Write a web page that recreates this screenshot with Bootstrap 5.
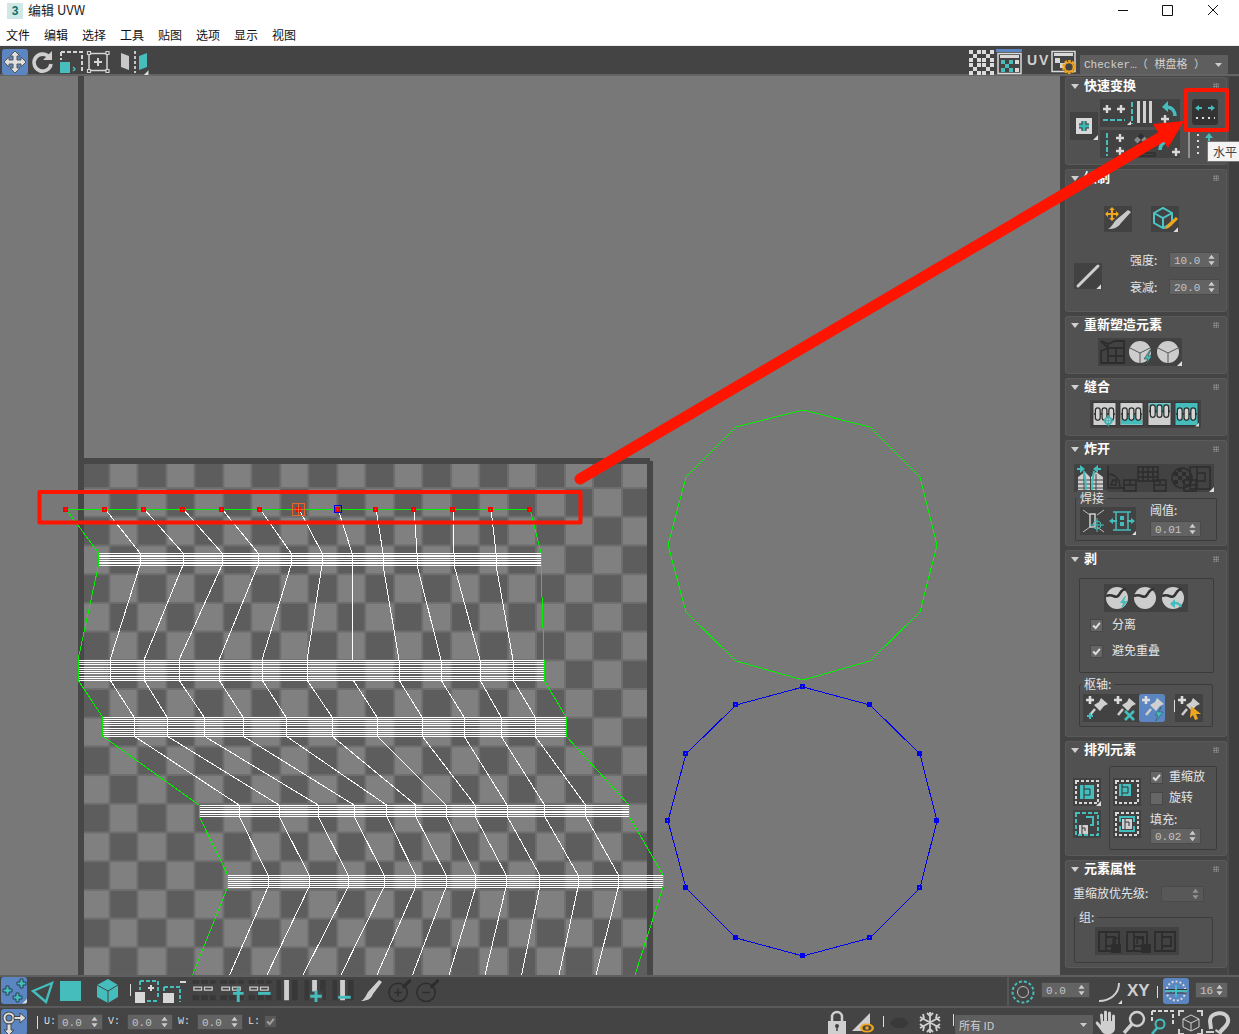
<!DOCTYPE html>
<html lang="zh">
<head>
    <meta charset="UTF-8">
    <title>编辑 UVW</title>
    <link href="https://cdn.jsdelivr.net/npm/bootstrap@5.3.0/dist/css/bootstrap.min.css" rel="stylesheet">
    <style>
        html, body { height: 1034px; overflow: hidden; background: #444; }
        body { width: 1239px; position: relative; font-family: "Noto Sans CJK SC", "Liberation Sans", sans-serif; font-size: 12px; color: #e4e4e4; }
        svg { display: block; flex: none; }
        .fl { fill: #ddd; }

        .titlebar { height: 22px; background: #fff; color: #222; font-size: 13px; }
        .logo3 { width: 16px; height: 16px; margin: 3px 5px 0 7px; background: #cfe8e6; color: #0d6f6c; font: bold 12px/16px "Liberation Sans", sans-serif; text-align: center; }
        .menubar { height: 24px; background: #fff; border-bottom: 1px solid #efefef; padding-left: 6px; gap: 14px; }
        .menubar .nav-link { padding: 0; color: #111; font-size: 12px; line-height: 25px; }

        .topbar { height: 30px; background: #444; padding: 3px 11px 0 2px; border-bottom: 2px solid #636363; }
        .btn-on { background: #5b86c2; border-radius: 3px; }
        .uvtxt { width: 26px; color: #cfcfcf; font: bold 14px/22px "Liberation Sans", sans-serif; letter-spacing: 2px; padding-left: 3px; }
        .combo { background: #5e5e5e; color: #cfcfcf; height: 19px; font-size: 11px; line-height: 21px; padding: 0 5px 0 4px; border-radius: 1px; }
        .combo-a { width: 148px; margin: 6px 0 0 2px; font-family: "Liberation Mono", "Noto Sans CJK SC", monospace; }
        .combo-b { width: 138px; margin-top: 6px; }

        .mainrow { height: 899px; }
        .viewport { width: 1060px; height: 899px; background: #787878; }
        .sidepanes { width: 179px; padding: 1px 0 0 5px; background: #444; }
        .pane-col { width: 162px; gap: 4px; }
        .scrollstrip { width: 12px; background: #3f3f3f; border-left: 2px solid #4b4b4b; }

        .pane { background: #515151; box-shadow: inset 0 0 0 1px #5a5a5a, inset 0 -1px 0 #3e3e3e; border-radius: 3px; position: relative; }
        .pane-h { height: 18px; line-height: 15px; padding-left: 19px; font-weight: 700; font-size: 13px; color: #fff; }
        .pane-h::before { content: ""; position: absolute; left: 6px; top: 7px; border: 4px solid transparent; border-top: 5px solid #cfcfcf; border-bottom: 0; }
        .pane-h::after { content: ""; position: absolute; right: 8px; top: 6px; width: 6px; height: 6px; background-image: radial-gradient(#888 1px, transparent 1px); background-size: 2.4px 2.4px; }
        .h88 { height: 88px; } .h143 { height: 143px; } .h58 { height: 58px; } .h106 { height: 106px; }
        .h187 { height: 187px; } .h115 { height: 115px; } .h108 { height: 108px; }

        .bx { background: #424242; }
        .spin { background: #636363; color: #c4c4c4; height: 16px; font: 11px/16px "Liberation Mono", monospace; padding: 0 4px; border-radius: 1px; border: 1px solid #4a4a4a; }
        .w51 { width: 51px; } .w46 { width: 46px; } .w49 { width: 49px; } .w33 { width: 33px; } .w43 { width: 43px; }
        .chk { width: 13px; height: 13px; background: #666; border: 1px solid #474747; flex: none; }
        .flabel { line-height: 13px; }
        .kbd-lbl { font: 10px/16px "Liberation Mono", monospace; color: #ddd; }
        .gbox { border: 1px solid #3b3b3b; border-radius: 2px; position: relative; }
        .glegend { position: absolute; top: -9px; left: 1px; background: #515151; padding: 0 3px; line-height: 16px; }

        .lm-2 { margin-left: 2px; } .lm-5 { margin-left: 5px; } .ms-9 { margin-left: 9px; } .ms-10 { margin-left: 10px; } .ms-14 { margin-left: 14px; } .ms-25 { margin-left: 25px; } .ms-33 { margin-left: 33px; } .ms-39 { margin-left: 39px; } .ms-8 { margin-left: 8px; } .ms-19 { margin-left: 19px; } .ms-28 { margin-left: 28px; } .ms-6 { margin-left: 6px; }
        .gt-1 { margin-top: 1px; } .gt-3 { margin-top: 3px; } .gt-4 { margin-top: 4px; } .gt-5 { margin-top: 5px; } .gt-6 { margin-top: 6px; } .gt-7 { margin-top: 7px; } .gt-8 { margin-top: 8px; } .gt-9 { margin-top: 9px; } .gt-10 { margin-top: 10px; } .gt-11 { margin-top: 11px; } .gt-13 { margin-top: 13px; } .gt-15 { margin-top: 15px; } .gt-17 { margin-top: 17px; } .gt-19 { margin-top: 19px; } .gt-20 { margin-top: 20px; } .lift-4 { margin-top: -4px; }

        .lab-a { width: 39px; } .lab-b { width: 88px; }
        .fs-weld { width: 142px; height: 43px; padding: 8px 0 0 4px; }
        .fs-peel { width: 135px; height: 95px; padding: 5px 0 0 24px; }
        .fs-pivot { width: 134px; height: 43px; padding: 9px 0 0 3px; }
        .fs-arr { width: 108px; height: 84px; padding: 4px 0 0 3px; }
        .fs-grp { width: 139px; height: 46px; padding: 9px 0 0 20px; }
        .fs-stitch { width: 111px; padding: 1px 2px; }
        .chk-row { margin-left: -14px; }
        .chk-text { margin-left: 9px; height: 13px; line-height: 10px; }
        .chk-text-s { margin-left: 6px; }
        .xyt { width: 30px; color: #cfcfcf; font: bold 17px/26px "Liberation Sans", sans-serif; padding-left: 5px; }
        .spin-off { background: #585858; }

        .bar1 { height: 31px; background: #444; border-top: 2px solid #5f5f5f; padding-left: 1px; }
        .bar1-r { width: 232px; height: 29px; border-left: 2px solid #565656; padding-top: 1px; }
        .bar2 { height: 28px; background: #444; border-top: 2px solid #5a5a5a; padding: 1px 3px 0 1px; }
        .bar2 .spin { margin-top: 5px; }
        .bar2 .kbd-lbl { margin-top: 5px; }
        .lbl-u { width: 13px; } .lbl-v { width: 24px; padding-left: 5px; } .lbl-l { width: 21px; padding-left: 5px; }
        .chk-off { margin-top: 6px; opacity: .6; }

        .overlay { position: absolute; top: 0; left: 0; pointer-events: none; z-index: 5; }
        .tip { position: absolute; left: 1207px; top: 141px; width: 32px; height: 21px; white-space: nowrap; background: #f4f4f4; border: 1px solid #777; border-right: 0; color: #444; font-size: 12px; line-height: 19px; padding-left: 5px; z-index: 6; }
    </style>
</head>
<body>
<svg width="0" height="0" class="position-absolute">
    <defs>
        <symbol id="fly" viewBox="0 0 28 28"><path fill="#ddd" d="M28 23v5h-5z"/></symbol>
        <symbol id="sp" viewBox="0 0 8 12"><path fill="#ccc" d="M4 0l3.500 4.500h-7zM4 12L.5 7.500h7z"/></symbol>
        <symbol id="tick" viewBox="0 0 13 13"><path fill="none" stroke="#ddd" stroke-width="2.400" d="M2.500 6.500l3 3 5-6"/></symbol>
        <symbol id="el" viewBox="0 0 28 28"><path fill="none" stroke="#2d2d2d" stroke-width="1.800" d="M4 5h20v19H4zM11 5v19M11 10h9v9h-9"/></symbol>
        <symbol id="pinb" viewBox="0 0 28 28"><path fill="none" stroke="#ddd" stroke-width="2.600" d="M3 6h8M7 2v8"/><path fill="#cfcfcf" d="M18 4l7 6-4 2-4 5-6-6 5-3z"/><path stroke="#cfcfcf" stroke-width="2.500" d="M12 15l-5 6"/></symbol>
        <symbol id="peel" viewBox="0 0 28 28"><circle cx="13" cy="14" r="11" fill="#cdcdcd"/><path fill="none" stroke="#333" stroke-width="2.600" d="M2 12c7-3 9 3 12 0s3-7 8-7"/></symbol>
        <symbol id="rows" viewBox="0 0 28 28"><path fill="#383838" d="M2 3h7v4H2zm9 0h7v4h-7zm9 0h6v4h-6zM2 19h7v5H2zm9 0h7v5h-7zm9 0h6v5h-6z"/><path fill="none" stroke="#ccc" stroke-width="1.300" d="M3.500 10.500h8v3h-8zM14.500 10.500h8v3h-8z"/></symbol>
        <symbol id="cols" viewBox="0 0 28 28"><path fill="#383838" d="M2 3h5v21H2zM18 3h6v21h-6z"/><path fill="#d0d0d0" d="M10 3h5v21h-5z"/></symbol>
        <symbol id="ball" viewBox="0 0 28 28"><circle cx="12" cy="16" r="9.500" fill="none" stroke="#2d2d2d" stroke-width="1.600"/><path stroke="#2d2d2d" stroke-width="3" d="M17 11L25 3"/></symbol>
        <symbol id="stitch" viewBox="0 0 26 26"><path stroke="#2d2d2d" stroke-width="1.400" d="M2 13h22"/><g fill="#d4d4d4" stroke="#2d2d2d" stroke-width="1.300"><rect x="3.500" y="6.500" width="5" height="13" rx="2.500"/><rect x="10.500" y="6.500" width="5" height="13" rx="2.500"/><rect x="17.500" y="6.500" width="5" height="13" rx="2.500"/></g></symbol>
        <symbol id="cluster" viewBox="0 0 12 12"><path fill="#dcdcdc" d="M0 0h4v4H0zm8 0h4v4H8zM4 4h4v4H4zM0 8h4v4H0zm8 0h4v4H8z"/></symbol>
    </defs>
</svg>

<div class="titlebar d-flex">
    <div class="logo3">3</div>
    <div>编辑 UVW</div>
    <div class="ms-auto d-flex">
        <svg width="122" height="22" viewBox="0 0 122 22" fill="none" stroke="#111"><path d="M1 10.500h10M45.500 5.500h10v10h-10zM91 5l10 10M101 5L91 15"/></svg>
    </div>
</div>
<nav class="nav menubar">
    <a class="nav-link" href="#">文件</a><a class="nav-link" href="#">编辑</a><a class="nav-link" href="#">选择</a><a class="nav-link" href="#">工具</a><a class="nav-link" href="#">贴图</a><a class="nav-link" href="#">选项</a><a class="nav-link" href="#">显示</a><a class="nav-link" href="#">视图</a>
</nav>

<div class="topbar d-flex">
    <svg class="btn-on" width="26" height="26" viewBox="0 0 26 26"><path fill="#dfdfdf" stroke="#555" d="M13 2l5 5h-3v4h4V8l5 5-5 5v-3h-4v4h3l-5 5-5-5h3v-4H7v3l-5-5 5-5v3h4V7H8z"/></svg>
    <svg width="30" height="26" viewBox="0 0 30 26"><path fill="none" stroke="#cfcfcf" stroke-width="3.600" d="M21 8a8.500 8.500 0 1 0 2 7"/><path fill="#cfcfcf" d="M24 2v9h-9z"/></svg>
    <svg width="28" height="26" viewBox="0 0 28 26"><path fill="none" stroke="#d4d4d4" stroke-width="2" stroke-dasharray="4 2" d="M3 3h21v20"/><path fill="#47bdbd" d="M2 13h10v11H2z"/><path fill="none" stroke="#47bdbd" stroke-width="1.500" d="M15 18l2 2-2 2"/><path fill="none" stroke="#d4d4d4" stroke-width="2" stroke-dasharray="4 2" d="M3 3v8"/></svg>
    <svg width="34" height="26" viewBox="0 0 34 26" fill="none" stroke="#d4d4d4"><path stroke-width="1.500" d="M3 4.500h18v17H3z"/><path fill="#444" stroke-width="1.200" d="M1.500 2.500h3v3h-3zM20 2.500h3v3h-3zM1.500 20.500h3v3h-3zM20 20.500h3v3h-3z"/><path stroke-width="2" d="M12 9v8M8 13h8"/></svg>
    <svg width="31" height="26" viewBox="0 0 31 26"><path fill="#c9c9c9" d="M1 4l8 3v14l-8-3z"/><path fill="none" stroke="#d4d4d4" stroke-width="1.800" stroke-dasharray="3 2" d="M15 2v22"/><path fill="#47bdbd" d="M27 4l-8 3v14l8-3z"/><use href="#fly"/></svg>

    <div class="ms-auto d-flex">
        <svg width="28" height="26" viewBox="0 0 28 26"><use href="#cluster" x="1" y="1" width="12" height="12"/><use href="#cluster" x="14" y="1" width="12" height="12"/><use href="#cluster" x="1" y="14" width="12" height="12"/><use href="#cluster" x="14" y="14" width="12" height="12"/></svg>
        <svg width="28" height="26" viewBox="0 0 28 26"><path fill="#5b86c2" d="M0 0h26v3H0z"/><path fill="none" stroke="#d8d8d8" stroke-width="1.500" d="M2 4.500h23v20H2z"/><path fill="#d8d8d8" d="M4 6h19v3H4z"/><path fill="#47bdbd" d="M5 11h4v4H5zm8 0h4v4h-4zm-4 4h4v4H9zm-4 4h4v4H5zm8 0h4v4h-4z"/><path fill="#d8d8d8" d="M19 11h4v4h-4zm0 8h4v4h-4z"/></svg>
        <div class="uvtxt">UV</div>
        <svg width="28" height="26" viewBox="0 0 28 26"><path fill="none" stroke="#d8d8d8" stroke-width="1.500" d="M2 2.500h23v20H2z"/><path fill="#d8d8d8" d="M4 4h19v3H4zM5 9h5v5H5zm5 5h5v5h-5z"/><circle cx="19" cy="18" r="5.500" fill="none" stroke="#efa21e" stroke-width="3" stroke-dasharray="2.500 1"/><circle cx="19" cy="18" r="4.500" fill="none" stroke="#efa21e" stroke-width="1.600"/></svg>
        <div class="combo combo-a d-flex justify-content-between"><span>Checker…（ 棋盘格 ）</span><svg width="9" height="19" viewBox="0 0 9 19"><path fill="#ccc" d="M1 8h7l-3.500 4z"/></svg></div>
    </div>
</div>

<div class="mainrow d-flex">
    <div class="viewport">
        <svg width="1060" height="899" viewBox="0 76 1060 899" shape-rendering="crispEdges">
            <defs>
                <pattern id="chess" patternUnits="userSpaceOnUse" x="80.560" y="459.400" width="56.940" height="57.400">
                    <rect width="56.940" height="57.400" fill="#6e6e6e"/>
                    <rect x="1" y="1" width="26.500" height="26.700" fill="#5d5d5d"/>
                    <rect x="29.500" y="1" width="26.500" height="26.700" fill="#808080"/>
                    <rect x="1" y="29.700" width="26.500" height="26.700" fill="#808080"/>
                    <rect x="29.500" y="29.700" width="26.500" height="26.700" fill="#5d5d5d"/>
                </pattern>
            </defs>
            <rect x="84" y="464" width="563" height="512" fill="url(#chess)"/>
            <rect x="78" y="76" width="6" height="900" fill="#474747"/>
            <rect x="84" y="458" width="566" height="6" fill="#474747"/>
            <rect x="647" y="461" width="6" height="515" fill="#474747"/>
            <g id="mesh" fill="none"></g>
            <polygon fill="none" stroke="#00f000" points="803,410 870,427 920,477 937,545 920,612 870,661 803,680 736,661 686,612 668,545 686,477 736,427"/>
            <polygon id="ringblue" fill="none" stroke="#0000f0" points="803,687 870,705 920,754 937,821 920,888 870,938 803,956 736,938 686,888 668,821 686,754 736,705"/>
        </svg>
    </div>

    <aside class="sidepanes d-flex">
        <div class="pane-col d-flex flex-column">

            <section class="pane h88">
                <div class="pane-h">快速变换</div>
                <div class="d-flex">
                    <svg class="bx lm-5 gt-17" width="28" height="28" viewBox="0 0 28 28"><rect x="6" y="6" width="16" height="16" fill="#d8d8d8"/><path fill="none" stroke="#333" stroke-width="5" d="M14 9v10M9 14h10"/><path fill="none" stroke="#3fb5b5" stroke-width="3" d="M14 9v10M9 14h10"/><use href="#fly"/></svg>
                    <div class="lm-2">
                        <div class="d-flex gt-4">
                            <svg class="bx" width="80" height="28" viewBox="0 0 80 28"><path fill="none" stroke="#d8d8d8" stroke-width="2.400" d="M3 10h8M7 6v8M17 10h8M21 6v8"/><path fill="none" stroke="#45bdbd" stroke-width="2" stroke-dasharray="5 2" d="M3 21h22"/><path fill="#ddd" d="M31 22v4h-4z"/><path fill="none" stroke="#45bdbd" stroke-width="2" stroke-dasharray="5 2" d="M32 3v22"/><path fill="#cfcfcf" d="M37 2h3v22h-3zM43 2h3v22h-3zM49 2h3v22h-3z"/><path fill="none" stroke="#45bdbd" stroke-width="3.600" d="M66 8c6 0 9 4 9 9"/><path fill="#45bdbd" d="M62 8l6-6v11z"/><path fill="none" stroke="#d8d8d8" stroke-width="2.400" d="M61 20h8M65 16v8"/></svg>
                            <svg class="ms-auto" width="26" height="26" viewBox="0 0 26 26"><rect width="26" height="26" rx="3" fill="#333"/><path fill="#45bdbd" d="M3 9l4-3v2h3v2H7v2zM23 9l-4-3v2h-3v2h3v2z"/><path stroke="#ddd" stroke-width="2" stroke-dasharray="2 4" d="M4 19h19"/></svg>
                        </div>
                        <div class="d-flex gt-3">
                            <svg class="bx" width="80" height="28" viewBox="0 0 80 28"><path fill="none" stroke="#45bdbd" stroke-width="2" stroke-dasharray="5 2" d="M7 3v23"/><path fill="none" stroke="#d8d8d8" stroke-width="2.400" d="M16 8h8M20 4v8M16 21h8M20 17v8"/><path fill="#2f2f2f" d="M34 10l7-7 7 7-7 7z"/><path fill="#888" d="M34 10l3.500-3.500 3.500 3.500-3.500 3.500zM41 10l3.500-3.500 3.500 3.500-3.500 3.500z"/><path fill="none" stroke="#2f2f2f" stroke-width="1.500" d="M37 23h18v3H37z"/><path fill="none" stroke="#45bdbd" stroke-width="3.600" d="M60 20c0-5 3-8 8-9"/><path fill="none" stroke="#d8d8d8" stroke-width="2.400" d="M72 22h8M76 18v8"/></svg>
                            <svg width="38" height="28" viewBox="0 0 38 28"><path fill="#909090" d="M8 0h2v28H8z"/><path stroke="#ddd" stroke-width="2" stroke-dasharray="2 4" d="M18 4v21"/><path fill="#45bdbd" d="M29 3l4 5h-3v12h-2V8h-3z"/></svg>
                        </div>
                    </div>
                </div>
            </section>

            <section class="pane h143">
                <div class="pane-h">绘制</div>
                <div class="d-flex ms-39 gt-19">
                    <svg class="bx" width="28" height="26" viewBox="0 0 28 26"><path fill="#f0a51e" d="M8 1l3 3H9v3h3V5l3 3-3 3V9H9v3h2l-3 3-3-3h2V9H4v2L1 8l3-3v2h3V4H5z"/><path fill="#c9c9c9" d="M24 4l3 2-10 11c-3 5-8 6-13 6 4-2 5-6 8-9z"/></svg>
                    <svg class="bx ms-19" width="28" height="26" viewBox="0 0 28 26"><path fill="none" stroke="#4cc4c4" stroke-width="2" d="M3 7l9-5 9 5v10l-9 5-9-5zM3 7l9 5 9-5M12 12v10"/><path fill="#f0a51e" d="M25 11l2 2-7 7c-2 2-4 3-7 3 3-2 3-4 5-6z"/><use href="#fly"/></svg>
                </div>
                <div class="d-flex gt-20">
                    <svg class="bx ms-9 gt-11" width="28" height="26" viewBox="0 0 28 26"><path stroke="#cfcfcf" stroke-width="3" stroke-linecap="round" d="M4 23L24 3"/><use href="#fly"/></svg>
                    <div class="ms-28">
                        <div class="d-flex"><span class="lab-a flabel gt-1">强度:</span><div class="spin w51 d-flex justify-content-between"><span>10.0</span><svg width="7" height="14" viewBox="0 0 8 12"><use href="#sp"/></svg></div></div>
                        <div class="d-flex gt-11"><span class="lab-a flabel gt-1">衰减:</span><div class="spin w51 d-flex justify-content-between"><span>20.0</span><svg width="7" height="14" viewBox="0 0 8 12"><use href="#sp"/></svg></div></div>
                    </div>
                </div>
            </section>

            <section class="pane h58">
                <div class="pane-h">重新塑造元素</div>
                <svg class="bx ms-33 gt-4" width="84" height="28" viewBox="0 0 84 28"><path fill="none" stroke="#2d2d2d" stroke-width="1.800" d="M3 3l7 3 7-3h9v22H3V13l7-3zM10 10h16M10 18h16M18 10v15M10 6v19"/><circle cx="42" cy="14" r="11" fill="#cdcdcd"/><path stroke="#555" fill="none" d="M42 15v10M42 15l-10-5M42 15l10-5"/><path fill="#45bdbd" stroke="#333" stroke-width=".6" d="M52 12l-6 9h4l-3 7 7-10h-4l3-6z"/><circle cx="70" cy="14" r="11" fill="#cdcdcd"/><path stroke="#555" fill="none" d="M70 15v10M70 15l-10-5M70 15l10-5"/><path fill="#ddd" d="M84 23v5h-5z"/></svg>
            </section>

            <section class="pane h58">
                <div class="pane-h">缝合</div>
                <div class="d-flex bx fs-stitch ms-25 gt-4 justify-content-between">
                    <svg width="25" height="26" viewBox="0 0 26 26"><rect width="24" height="24" x="1" y="1" fill="#cfcfcf" stroke="#333"/><use href="#stitch"/><circle cx="17" cy="20" r="3.500" fill="#cfcfcf" stroke="#3fb0b0" stroke-width="2"/><path stroke="#3fb0b0" d="M17 14v12M11 20h12"/></svg>
                    <svg width="25" height="26" viewBox="0 0 26 26"><rect width="24" height="24" x="1" y="1" fill="#cfcfcf" stroke="#333"/><rect x="2" y="14" width="22" height="10" fill="#45bdbd"/><use href="#stitch"/></svg>
                    <svg width="25" height="26" viewBox="0 0 26 26"><rect width="24" height="24" x="1" y="1" fill="#cfcfcf" stroke="#333"/><rect x="2" y="2" width="22" height="10" fill="#45bdbd"/><use href="#stitch" y="-3"/></svg>
                    <svg width="25" height="26" viewBox="0 0 26 26"><rect width="24" height="24" x="1" y="1" fill="#45bdbd" stroke="#333"/><use href="#stitch"/><path fill="#ddd" d="M26 22v4h-4z"/></svg>
                </div>
            </section>

            <section class="pane h106">
                <div class="pane-h">炸开</div>
                <svg class="bx ms-9 gt-6" width="140" height="28" viewBox="0 0 140 28"><path fill="#cfcfcf" d="M4 27V13l7-5 5 5v14zM17 27V13l5-5 7 5v14z"/><path stroke="#424242" fill="none" d="M4 16h25M4 20h25M4 24h25M10 10v17M22 10v17"/><path fill="none" stroke="#45bdbd" stroke-width="2" d="M12 27c0-8-1-14-2-20M18 27c0-8 1-14 2-20"/><path fill="#45bdbd" d="M11 5L6 1v3H3v2h3v3zM19 5l5-4v3h3v2h-3v3z"/><g fill="none" stroke="#2d2d2d" stroke-width="1.500"><path d="M34 2v22h17M34 10c8 0 12 6 12 14M39 16h3v5h-5z"/><path d="M50 16h12v11H50zM50 21h12M56 16v5"/><path d="M64 3h20v14H64zM64 8h20M64 13h20M69 3v14M74 3v14M79 3v14"/><path d="M80 16h12v11H80zM80 21h12M86 16v5"/><circle cx="108" cy="14" r="10"/><path d="M110 16h12v11h-12zM110 21h12M116 16v5"/><path d="M116 3h20v22h-20zM123 3v22M123 9h8v8h-8z" /></g><path fill="#2d2d2d" d="M100 8h4v4h-4zm8 0h4v4h-4zm-4 4h4v4h-4zm8 0h3v4h-3zm-12 4h4v4h-4zm8 0h3v3h-3zm-4-12h4v4h-4z"/><path fill="#ddd" d="M140 23v5h-5z"/></svg>
                <div class="gbox fs-weld ms-10 gt-6 d-flex">
                    <span class="glegend">焊接</span>
                    <svg class="bx" width="56" height="28" viewBox="0 0 56 28"><path fill="none" stroke="#bdbdbd" d="M3 3l7 5M24 3l-7 5M3 25l7-5M24 25l-7-5"/><path fill="none" stroke="#cfcfcf" stroke-width="1.500" d="M10 7h5v13h-5z"/><circle cx="17" cy="18" r="4" fill="none" stroke="#45bdbd"/><path stroke="#45bdbd" d="M17 11v14M10 18h14"/><path fill="none" stroke="#45bdbd" stroke-width="1.500" d="M33 5h18M33 23h18M36 5v18M48 5v18"/><path fill="#45bdbd" d="M29 14l4-3v2h4v2h-4v2zM55 14l-4-3v2h-4v2h4v2zM40 9h4v4h-4zm0 6h4v4h-4z"/><path fill="#ddd" d="M56 24v4h-4z"/></svg>
                    <div class="ms-14 lift-4">
                        <div class="flabel">阈值:</div>
                        <div class="spin w51 d-flex justify-content-between gt-5"><span>0.01</span><svg width="7" height="14" viewBox="0 0 8 12"><use href="#sp"/></svg></div>
                    </div>
                </div>
            </section>

            <section class="pane h187">
                <div class="pane-h">剥</div>
                <div class="gbox fs-peel ms-14 gt-10">
                    <svg class="bx" width="84" height="28" viewBox="0 0 84 28"><use href="#peel" width="28" height="28"/><path fill="#45bdbd" d="M21 12l-5 7h3l-2 6 7-8h-4l2-5z"/><use href="#peel" x="28" width="28" height="28"/><use href="#peel" x="56" width="28" height="28"/><path fill="none" stroke="#45bdbd" stroke-width="2.500" d="M68 20c4-2 7-1 9 3"/><path fill="#45bdbd" d="M66 20l5-5v9z"/></svg>
                    <div class="d-flex chk-row gt-7 align-items-center"><div class="chk"><svg width="11" height="11"><use href="#tick" width="11" height="11"/></svg></div><span class="chk-text">分离</span></div>
                    <div class="d-flex chk-row gt-13 align-items-center"><div class="chk"><svg width="11" height="11"><use href="#tick" width="11" height="11"/></svg></div><span class="chk-text">避免重叠</span></div>
                </div>
                <div class="gbox fs-pivot ms-14 gt-11 d-flex">
                    <span class="glegend">枢轴:</span>
                    <svg class="bx" width="56" height="28" viewBox="0 0 56 28"><use href="#pinb" width="28" height="28"/><path stroke="#45bdbd" stroke-width="2" fill="none" d="M4 22h6M7 19v6"/><use href="#pinb" x="28" width="28" height="28"/><path stroke="#45bdbd" stroke-width="2.600" fill="none" d="M42 17l9 9M51 17l-9 9"/></svg>
                    <svg class="btn-on" width="26" height="28" viewBox="0 0 26 28"><use href="#pinb" width="28" height="28"/><path fill="#45bdbd" stroke="#345" stroke-width=".5" d="M22 13l-6 8h3l-2 6 7-9h-4l2-5z"/></svg>
                    <svg width="10" height="28" viewBox="0 0 10 28"><path stroke="#ddd" d="M9.500 6v12"/></svg>
                    <svg class="bx" width="28" height="28" viewBox="0 0 28 28"><use href="#pinb" width="28" height="28"/><path fill="#f0a51e" d="M16 12l10 8h-5l2 5-3 1-2-5-3 3z"/></svg>
                </div>
            </section>

            <section class="pane h115">
                <div class="pane-h">排列元素</div>
                <div class="d-flex">
                    <div class="ms-8 gt-19">
                        <svg class="bx" width="28" height="28" viewBox="0 0 28 28"><path fill="none" stroke="#d8d8d8" stroke-width="2" stroke-dasharray="3 2" d="M3 3h22v22H3z"/><path fill="#45bdbd" d="M7 7h14v14H7z"/><path fill="none" stroke="#333" d="M11 7v14M11 11h6v6h-6"/><path fill="#ddd" d="M28 23v5h-5z"/></svg>
                        <svg class="bx gt-4" width="28" height="28" viewBox="0 0 28 28"><path fill="none" stroke="#45bdbd" stroke-width="2" stroke-dasharray="4 2" d="M3 3h22v22H3z"/><path fill="#cfcfcf" d="M6 15h9v9H6z"/><path fill="none" stroke="#333" d="M9 15v9M9 18h3v3"/><path fill="none" stroke="#45bdbd" stroke-width="2" d="M13 7h7v8h-3"/></svg>
                    </div>
                    <div class="gbox fs-arr ms-8 gt-7 d-flex">
                        <div class="gt-7">
                            <svg class="bx" width="28" height="28" viewBox="0 0 28 28"><path fill="none" stroke="#d8d8d8" stroke-width="2" stroke-dasharray="3 2" d="M3 3h22v22H3z"/><path fill="#45bdbd" d="M6 6h12v12H6z"/><path fill="none" stroke="#333" d="M9 6v12M9 9h6v6H9"/></svg>
                            <svg class="bx gt-4" width="28" height="28" viewBox="0 0 28 28"><path fill="none" stroke="#d8d8d8" stroke-width="2" stroke-dasharray="3 2" d="M3 3h22v22H3z"/><path fill="none" stroke="#45bdbd" stroke-width="2" d="M7 12V7h14v5M7 16v5h14v-5"/><path fill="#cfcfcf" d="M9 9h10v10H9z"/><path fill="none" stroke="#333" d="M12 9v10M12 12h4v4"/></svg>
                        </div>
                        <div class="ms-9">
                            <div class="d-flex align-items-center"><div class="chk"><svg width="11" height="11"><use href="#tick" width="11" height="11"/></svg></div><span class="chk-text chk-text-s">重缩放</span></div>
                            <div class="d-flex align-items-center gt-8"><div class="chk"></div><span class="chk-text chk-text-s">旋转</span></div>
                            <div class="flabel gt-7">填充:</div>
                            <div class="spin w51 d-flex justify-content-between gt-3"><span>0.02</span><svg width="7" height="14" viewBox="0 0 8 12"><use href="#sp"/></svg></div>
                        </div>
                    </div>
                </div>
            </section>

            <section class="pane h108">
                <div class="pane-h">元素属性</div>
                <div class="d-flex ms-8 gt-8">
                    <span class="lab-b flabel">重缩放优先级:</span>
                    <div class="spin spin-off w43 d-flex justify-content-end"><svg width="7" height="14" viewBox="0 0 8 12" opacity=".5"><use href="#sp"/></svg></div>
                </div>
                <div class="gbox fs-grp ms-9 gt-15">
                    <span class="glegend">组:</span>
                    <svg class="bx" width="84" height="28" viewBox="0 0 84 28"><use href="#el" width="28" height="28" x="0"/><g fill="none" stroke="#2d2d2d" stroke-width="1.500"><path d="M18 17v-3a3 3 0 0 1 6 0v3"/></g><rect x="16" y="17" width="10" height="9" rx="1" fill="#2d2d2d"/><use href="#el" width="28" height="28" x="28"/><g fill="none" stroke="#2d2d2d" stroke-width="1.500"><path d="M42 17v-3a3 3 0 0 1 6 0"/></g><rect x="46" y="17" width="10" height="9" rx="1" fill="#2d2d2d"/><use href="#el" width="28" height="28" x="56"/></svg>
                </div>
            </section>
        </div>
        <div class="scrollstrip"></div>
    </aside>
</div>

<div class="bar1 d-flex">
    <svg class="btn-on" width="26" height="27" viewBox="0 0 26 27"><g fill="#45bdbd" stroke="#2c3e50"><path d="M19 2h3v3h3v3h-3v3h-3V8h-3V5h3zM5 9h3v3h3v3H8v3H5v-3H2v-3h3zM15 16h3v3h3v3h-3v3h-3v-3h-3v-3h3z"/></g><use href="#fly"/></svg>
    <svg width="31" height="27" viewBox="0 0 31 27"><path fill="none" stroke="#45bdbd" stroke-width="2.400" d="M6 14L25 6l-6 19z"/></svg>
    <svg width="36" height="27" viewBox="0 0 36 27"><rect x="2" y="4" width="21" height="20" fill="#45bdbd"/></svg>
    <svg width="38" height="27" viewBox="0 0 38 27"><path fill="#45bdbd" d="M14 2l10 6v12l-10 6L3 20V8z"/><path fill="none" stroke="#444" d="M3 8l11 6 10-6M14 14v12"/><path stroke="#ddd" d="M36.500 7v12"/></svg>
    <svg width="30" height="27" viewBox="0 0 30 27"><path fill="none" stroke="#45bdbd" stroke-width="2" stroke-dasharray="4 2" d="M8 4h18v18"/><path fill="none" stroke="#45bdbd" stroke-width="2" stroke-dasharray="4 2" d="M8 4v9M15 24h11"/><path fill="#d8d8d8" d="M3 15h10v11H3z"/><path fill="none" stroke="#d8d8d8" stroke-width="2" d="M16 11h6M19 8v6"/></svg>
    <svg width="28" height="27" viewBox="0 0 28 27"><path fill="none" stroke="#45bdbd" stroke-width="2" stroke-dasharray="4 2" d="M2 10h16v15M2 10v6"/><path fill="#d8d8d8" d="M1 16h11v10H1z"/><path stroke="#d8d8d8" stroke-width="2" d="M18 5h6"/></svg>
    <svg width="28" height="27" viewBox="0 0 28 28"><use href="#rows"/></svg>
    <svg width="28" height="27" viewBox="0 0 28 28"><use href="#rows"/><path stroke="#45bdbd" stroke-width="3" d="M15 17h11M20.500 11v15"/></svg>
    <svg width="28" height="27" viewBox="0 0 28 28"><use href="#rows"/><path stroke="#45bdbd" stroke-width="3" d="M12 17h13"/></svg>
    <svg width="28" height="27" viewBox="0 0 28 28"><use href="#cols"/></svg>
    <svg width="28" height="27" viewBox="0 0 28 28"><use href="#cols"/><path fill="#444" d="M7 15h14v12H7z"/><path stroke="#45bdbd" stroke-width="3" d="M8 20h12M14 14v12"/></svg>
    <svg width="28" height="27" viewBox="0 0 28 28"><use href="#cols"/><path stroke="#45bdbd" stroke-width="3" d="M8 21h13"/></svg>
    <svg width="28" height="27" viewBox="0 0 28 27"><path fill="#cfcfcf" d="M21 3l3 2-9 12c-2 5-6 7-12 7 4-2 5-6 7-9z"/></svg>
    <svg width="28" height="27" viewBox="0 0 28 28"><use href="#ball"/><path stroke="#2d2d2d" stroke-width="1.500" d="M8 16h8M12 12v8"/></svg>
    <svg width="28" height="27" viewBox="0 0 28 28"><use href="#ball"/><path stroke="#2d2d2d" stroke-width="1.500" d="M8 16h8"/></svg>

    <div class="bar1-r ms-auto d-flex">
        <svg width="32" height="27" viewBox="0 0 32 27"><circle cx="14" cy="14" r="10.500" fill="none" stroke="#45bdbd" stroke-width="2" stroke-dasharray="3 2"/><circle cx="14" cy="14" r="5.500" fill="none" stroke="#bbb"/></svg>
        <div class="spin w49 d-flex justify-content-between gt-4"><span>0.0</span><svg width="7" height="14" viewBox="0 0 8 12"><use href="#sp"/></svg></div>
        <svg class="ms-2" width="24" height="27" viewBox="0 0 24 27"><path fill="none" stroke="#cfcfcf" stroke-width="2" d="M1 23c10 0 20-6 20-18"/><path fill="#ddd" d="M24 22v4h-4z"/></svg>
        <div class="xyt">XY</div>
        <svg width="11" height="27" viewBox="0 0 11 27"><path stroke="#ddd" d="M5.500 8v12"/></svg>
        <svg class="btn-on" width="26" height="26" viewBox="0 0 26 26"><circle cx="13" cy="13" r="9.500" fill="none" stroke="#d8d8d8" stroke-width="2" stroke-dasharray="2 2"/><path stroke="#d8d8d8" stroke-width="3" stroke-dasharray="1 2.500" d="M2 13h22"/><path stroke="#333" d="M2 11.500h22M2 15h22"/><path stroke="#45bdbd" stroke-width="2" d="M2 13h22M13 7v12"/></svg>
        <div class="spin w33 d-flex justify-content-between gt-4 ms-6"><span>16</span><svg width="7" height="14" viewBox="0 0 8 12"><use href="#sp"/></svg></div>
    </div>
</div>

<div class="bar2 d-flex">
    <svg class="btn-on" width="26" height="26" viewBox="0 0 26 26"><circle cx="8" cy="9" r="4.500" fill="none" stroke="#444" stroke-width="4"/><circle cx="8" cy="9" r="4.500" fill="none" stroke="#ddd" stroke-width="2"/><path fill="#ddd" stroke="#444" d="M13 7.500h6V4l6 5-6 5v-3.500h-6zM6 15v6H3l5 5 5-5h-3v-6z"/></svg>
    <svg width="17" height="26" viewBox="0 0 17 26"><path stroke="#ddd" d="M10.500 7v13"/></svg>
    <span class="kbd-lbl lbl-u">U:</span>
    <div class="spin w46 d-flex justify-content-between"><span>0.0</span><svg width="7" height="14" viewBox="0 0 8 12"><use href="#sp"/></svg></div>
    <span class="kbd-lbl lbl-v">V:</span>
    <div class="spin w46 d-flex justify-content-between"><span>0.0</span><svg width="7" height="14" viewBox="0 0 8 12"><use href="#sp"/></svg></div>
    <span class="kbd-lbl lbl-v">W:</span>
    <div class="spin w46 d-flex justify-content-between"><span>0.0</span><svg width="7" height="14" viewBox="0 0 8 12"><use href="#sp"/></svg></div>
    <span class="kbd-lbl lbl-l">L:</span>
    <div class="chk chk-off"><svg width="11" height="11"><use href="#tick" width="11" height="11"/></svg></div>

    <div class="ms-auto d-flex">
        <svg width="24" height="26" viewBox="0 0 24 26"><path fill="none" stroke="#cfcfcf" stroke-width="2.500" d="M6 12V8a5 5 0 0 1 10 0v4"/><path fill="#cfcfcf" d="M2 12h18v13H2z"/><circle cx="11" cy="17" r="2" fill="#444"/><path stroke="#444" stroke-width="1.500" d="M11 17v5"/></svg>
        <svg width="30" height="26" viewBox="0 0 30 26"><path fill="#cfcfcf" d="M20 4v18H2z"/><ellipse cx="17" cy="19" rx="7" ry="4.500" fill="#f0a51e"/><ellipse cx="17" cy="19" rx="4.500" ry="2.800" fill="#444"/><circle cx="17" cy="19" r="1.800" fill="#f0a51e"/></svg>
        <svg width="37" height="26" viewBox="0 0 37 26"><path stroke="#ddd" d="M3.500 7v11"/><path fill="#393939" d="M10 14c4-7 14-7 19 0-5 7-15 7-19 0z"/></svg>
        <svg width="28" height="26" viewBox="0 0 28 26"><g fill="none" stroke="#cfcfcf" stroke-width="1.800"><path d="M13 3v21M3 8l20 11M23 8L3 19M10 4l3 3 3-3M10 23l3-3 3 3M3 12l4-3-1-4M23 12l-4-3 1-4M3 15l4 3-1 4M23 15l-4 3 1 4"/></g></svg>
        <svg width="10" height="26" viewBox="0 0 10 26"><path stroke="#ddd" d="M8.500 5v12"/></svg>
        <div class="combo combo-b d-flex justify-content-between"><span>所有 ID</span><svg width="9" height="19" viewBox="0 0 9 19"><path fill="#ccc" d="M1 8h7l-3.500 4z"/></svg></div>
        <svg width="28" height="26" viewBox="0 0 28 26"><path fill="#cfcfcf" d="M7 6a1.500 1.500 0 0 1 3 0v6h1V3a1.500 1.500 0 0 1 3 0v9h1V4a1.500 1.500 0 0 1 3 0v8h1V7a1.500 1.500 0 0 1 3 0v12c0 4-3 6-6 6h-3c-3 0-4-2-6-5l-4-5c-1-2 1-3 2-2l3 3z"/></svg>
        <svg width="28" height="26" viewBox="0 0 28 26"><circle cx="16" cy="10" r="7" fill="none" stroke="#cfcfcf" stroke-width="2.400"/><path stroke="#cfcfcf" stroke-width="3.400" d="M11 15L3 24"/></svg>
        <svg width="28" height="26" viewBox="0 0 28 26"><path fill="none" stroke="#d8d8d8" stroke-width="2" stroke-dasharray="4 2" d="M3 2h21v15M3 2v12"/><circle cx="11" cy="15" r="4.500" fill="none" stroke="#45bdbd" stroke-width="2"/><path stroke="#45bdbd" stroke-width="2.600" d="M8 19l-5 6"/></svg>
        <svg width="28" height="26" viewBox="0 0 28 26"><g fill="none" stroke="#cfcfcf"><path stroke-width="2" d="M2 7V2h5M20 2h5v5M2 20v5h5M20 25h5v-5"/><path d="M14 6l8 4v8l-8 4-8-4v-8zM6 10l8 4 8-4M14 14v8"/></g></svg>
        <svg width="31" height="26" viewBox="0 0 31 26"><path fill="none" stroke="#cfcfcf" stroke-width="4" d="M6 20l-1-8c0-9 16-11 18-2 1 4-2 7-8 13"/><path fill="#cfcfcf" d="M1 22h8v2H1zM11 20l6 4-1 2-6-4z"/></svg>
    </div>
</div>

<div class="tip">水平</div>
<svg class="overlay" width="1239" height="1034" viewBox="0 0 1239 1034">
    <g fill="none" stroke="#ff1400" stroke-width="4" stroke-linejoin="round">
        <rect x="39.500" y="492" width="541" height="30.500"/>
        <rect x="1186" y="90" width="41" height="40"/>
    </g>
    <path stroke="#ff1400" stroke-width="11" stroke-linecap="round" d="M580 479L1168 133"/>
    <path fill="#ff1400" d="M1184 121l-31 3 15 24z"/>
</svg>

<script src="https://cdn.jsdelivr.net/npm/bootstrap@5.3.0/dist/js/bootstrap.bundle.min.js"></script>
<script>
    // x positions of the 13 mesh columns at each level of the unwrap
    const topRow = [66,105,144,183,222,260,299,338,376,414,453,491,530];
    const bands = [
        { y0: 553, y1: 565, n: 8, xs: [98.5,140,183,222,258,291,322,352,383,417,454,496,541] },
        { y0: 660, y1: 680, n: 10, xs: [78,110,144,179,219,262,307,353,399,441,480,513,544] },
        { y0: 717, y1: 736, n: 10, xs: [102.5,134,167,204,243,286,332,377,422,464,501,535,566] },
        { y0: 805, y1: 816, n: 7, xs: [199,239,279,318,354,386.5,415.6,446,475,507,544.5,585.5,629] },
        { y0: 875, y1: 887, n: 7, xs: [227.7,268,309,348,384,415.6,446,475.7,506,539.6,578,618.4,663] }
    ];
    const bottomRow = [192.5,229.6,267,303,341,377,412.5,449,485,521.6,559,596,635];

    let out = '';
    bands.forEach(b => {
        for (let k = 0; k < b.n; k++) {
            const y = Math.round(b.y0 + (b.y1 - b.y0) * k / (b.n - 1)) + 0.5;
            out += `<path stroke="#fff" d="M${b.xs[0]} ${y}H${b.xs[12]}"/>`;
        }
    });
    topRow.forEach((x, i) => {
        let pts = `${x},509`;
        bands.forEach(b => { pts += ` ${b.xs[i]},${b.y0} ${b.xs[i]},${b.y1}`; });
        pts += ` ${bottomRow[i]},975`;
        const col = (i === 0 || i === 12) ? '#00f000' : '#fff';
        out += `<polyline stroke="${col}" points="${pts}"/>`;
    });
    out += '<path stroke="#00f000" d="M66 509.500H530"/>';
    topRow.forEach(x => { out += `<rect x="${x - 2}" y="508" width="3" height="3" stroke="#f00" stroke-width="2"/>`; });
    out += '<path stroke="#e8622c" d="M292.500 503.500h12v12h-12zM298.500 503.500v12M292.500 509.500h12"/>';
    out += '<rect x="334.500" y="505.500" width="7" height="7" stroke="#0000f0"/>';
    document.getElementById('mesh').innerHTML = out;

    const ring = document.getElementById('ringblue');
    ring.getAttribute('points').split(' ').forEach(p => {
        const [x, y] = p.split(',');
        const r = document.createElementNS('http://www.w3.org/2000/svg', 'rect');
        r.setAttribute('x', x - 2); r.setAttribute('y', y - 2);
        r.setAttribute('width', 3); r.setAttribute('height', 3);
        r.setAttribute('fill', 'none'); r.setAttribute('stroke', '#0000f0'); r.setAttribute('stroke-width', 2);
        ring.parentNode.appendChild(r);
    });
</script>
</body>
</html>
